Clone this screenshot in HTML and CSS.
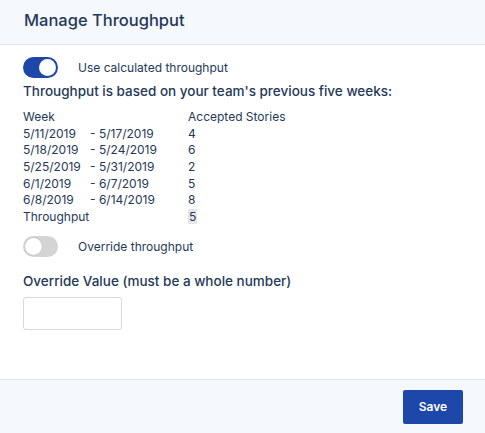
FILE: index.html
```html
<!DOCTYPE html>
<html>
<head>
<meta charset="utf-8">
<link rel="stylesheet" href="styles.css">
</head>
<body>
<div class="modal">
  <header class="header"><h1 class="title">Manage Throughput</h1></header>
  <main class="body">
    <div class="toggle-row">
      <span class="toggle on"><span class="knob"></span></span>
      <span class="toggle-label">Use calculated throughput</span>
    </div>
    <div class="heading">Throughput is based on your team's previous five weeks:</div>
    <div class="table">
      <div class="row"><span class="c1">Week</span><span class="c2"></span><span class="c3">Accepted Stories</span></div>
      <div class="row"><span class="c1">5/11/2019</span><span class="c2">- 5/17/2019</span><span class="c3">4</span></div>
      <div class="row"><span class="c1">5/18/2019</span><span class="c2">- 5/24/2019</span><span class="c3">6</span></div>
      <div class="row"><span class="c1">5/25/2019</span><span class="c2">- 5/31/2019</span><span class="c3">2</span></div>
      <div class="row"><span class="c1">6/1/2019</span><span class="c2">- 6/7/2019</span><span class="c3">5</span></div>
      <div class="row"><span class="c1">6/8/2019</span><span class="c2">- 6/14/2019</span><span class="c3">8</span></div>
      <div class="row"><span class="c1">Throughput</span><span class="c2"></span><span class="c3"><span class="hl">5</span></span></div>
    </div>
    <div class="toggle-row second">
      <span class="toggle off"><span class="knob"></span></span>
      <span class="toggle-label">Override throughput</span>
    </div>
    <label class="heading override">Override Value (must be a whole number)</label>
    <input class="input" type="text">
  </main>
  <footer class="footer"><button class="save">Save</button></footer>
</div>
</body>
</html>
```
FILE: styles.css
```css
html, body { margin: 0; padding: 0; }
body {
  width: 485px; height: 433px; background: #fff;
  font-family: Inter, "Liberation Sans", sans-serif;
  color: #253858;
}
.modal { display: flex; flex-direction: column; height: 433px; }
.header {
  height: 45px; background: #f5f8fd; border-bottom: 1px solid #e1e4e9;
  display: flex; align-items: center; padding: 0 0 4px 24px; box-sizing: border-box;
}
.title { margin: 0; font-size: 16.5px; font-weight: 500; color: #253858; letter-spacing: 0; }
.body { flex: 1; padding: 11px 23px 0; box-sizing: border-box; }
.toggle-row { display: flex; align-items: center; height: 22px; }
.toggle {
  width: 35px; height: 21px; border-radius: 11px; box-sizing: border-box;
  position: relative; flex: none;
}
.toggle.on { background: #1d47a8; }
.toggle.off { background: #d4d4d4; }
.knob {
  position: absolute; top: 2px; width: 17px; height: 17px; border-radius: 50%; background: #fff;
}
.toggle.on .knob { right: 2px; }
.toggle.off .knob { left: 2px; box-shadow: 0 0 1px rgba(0,0,0,.3); }
.toggle-label { font-size: 12px; margin-left: 20px; }
.heading { display: block; font-size: 13.5px; font-weight: 500; margin-top: 4px; line-height: 18px; }
.table { margin-top: 9px; font-size: 12px; }
.row { display: flex; height: 16.7px; line-height: 16.7px; }
.c1 { width: 67px; }
.c2 { width: 98px; }
.hl { background: #e6e6e6; padding: 0 1px; }
.second { margin-top: 10px; }
.override { margin-top: 14px; }
.input {
  display: block; margin-top: 7px; width: 99px; height: 33px; box-sizing: border-box;
  border: 1px solid #d7d9dd; border-radius: 3px; background: #fff;
}
.footer {
  height: 53px; background: #f5f8fd; border-top: 1px solid #e1e4e9;
  display: flex; justify-content: flex-end; align-items: center; padding-right: 22px;
}
.save {
  width: 60px; height: 34px; background: #1d47a8; color: #fff; border: none; border-radius: 2px;
  font-family: inherit; font-size: 12px; font-weight: 600; margin-top: 0;
}
```
